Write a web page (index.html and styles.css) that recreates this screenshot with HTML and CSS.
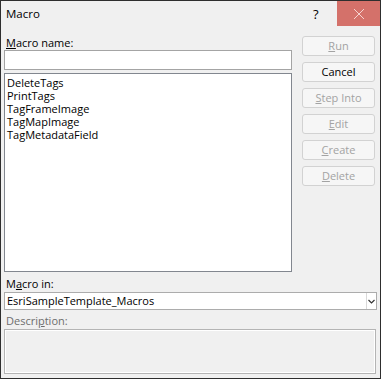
FILE: index.html
```html
<!DOCTYPE html>
<html>
<head>
<meta charset="utf-8">
<link rel="stylesheet" href="styles.css">
</head>
<body>
<div class="window">
  <div class="titlebar">
    <span class="title">Macro</span>
    <span class="help">?</span>
    <span class="close">
      <svg width="12" height="12" viewBox="0 0 12 12"><path d="M1 1 L11 11 M11 1 L1 11" stroke="#f6d3d0" stroke-width="1" fill="none"/></svg>
    </span>
  </div>
  <div class="content">
    <div class="toprow">
      <div class="leftcol">
        <div class="label"><u>M</u>acro name:</div>
        <div class="input"></div>
        <div class="list">
          <div class="item">DeleteTags</div>
          <div class="item">PrintTags</div>
          <div class="item">TagFrameImage</div>
          <div class="item">TagMapImage</div>
          <div class="item">TagMetadataField</div>
        </div>
      </div>
      <div class="buttons">
        <div class="btn disabled"><u>R</u>un</div>
        <div class="btn">Cancel</div>
        <div class="btn disabled"><u>S</u>tep Into</div>
        <div class="btn disabled"><u>E</u>dit</div>
        <div class="btn disabled"><u>C</u>reate</div>
        <div class="btn disabled"><u>D</u>elete</div>
      </div>
    </div>
    <div class="label label-in">M<u>a</u>cro in:</div>
    <div class="select">
      <span class="select-text">EsriSampleTemplate_Macros</span>
      <span class="arrow">
        <svg width="7" height="5" viewBox="0 0 7 5"><path d="M0.5 1 L3.5 4 L6.5 1" stroke="#333" stroke-width="1.2" fill="none"/></svg>
      </span>
    </div>
    <div class="label label-desc">Descri<u>p</u>tion:</div>
    <div class="desc"></div>
  </div>
</div>
</body>
</html>
```
FILE: styles.css
```css
html, body {
  margin: 0;
  padding: 0;
  background: #f0f0f0;
}
body {
  font-family: "Open Sans", "Noto Sans", sans-serif;
  font-size: 11px;
  color: #000;
}
.window {
  width: 381px;
  height: 379px;
  box-sizing: border-box;
  border: 1px solid #2e2e2e;
  background: #f0f0f0;
  display: flex;
  flex-direction: column;
}
.titlebar {
  height: 25px;
  display: flex;
  align-items: center;
}
.title {
  padding-left: 5px;
  font-size: 11.5px;
  flex: 1;
}
.help {
  width: 24px;
  text-align: left;
  font-size: 13px;
}
.close {
  width: 43px;
  height: 25px;
  background: #d4716a;
  display: flex;
  align-items: center;
  justify-content: center;
}
.content {
  padding: 0 3px;
  display: flex;
  flex-direction: column;
}
.toprow {
  display: flex;
  height: 247px;
}
.leftcol {
  width: 288px;
  padding-top: 9px;
  display: flex;
  flex-direction: column;
}
.label {
  height: 16px;
  line-height: 16px;
  padding-left: 2px;
  white-space: nowrap;
}
.leftcol .label {
  height: 15px;
  line-height: 15px;
}
.input {
  height: 20px;
  box-sizing: border-box;
  border: 1px solid #a4a4a4;
  background: #fff;
}
.list {
  margin-top: 3px;
  height: 199px;
  box-sizing: border-box;
  border: 1px solid #82878f;
  background: #fff;
  padding: 2px 2px;
}
.item {
  height: 13px;
  line-height: 13px;
  white-space: nowrap;
}
.buttons {
  margin-left: 10px;
  padding-top: 10px;
  display: flex;
  flex-direction: column;
  gap: 6px;
}
.btn {
  width: 73px;
  height: 20px;
  box-sizing: border-box;
  border: 1px solid #d2d2d2;
  border-radius: 3px;
  background: #f6f6f6;
  text-align: center;
  line-height: 18px;
}
.btn.disabled {
  color: #a3a3a3;
}
.label-in {
  margin-top: 3px;
}
.select {
  width: 373px;
  height: 18px;
  box-sizing: border-box;
  border: 1px solid #acacac;
  background: #fff;
  display: flex;
  align-items: center;
}
.select-text {
  flex: 1;
  padding-left: 2px;
  line-height: 16px;
}
.arrow {
  width: 9px;
  height: 16px;
  border-left: 1px solid #d9d9d9;
  display: flex;
  align-items: center;
  justify-content: center;
}
.label-desc {
  margin-top: 3px;
  color: #6d6d6d;
}
.desc {
  width: 372px;
  height: 45px;
  box-sizing: border-box;
  border: 1px solid #b4b4b4;
  box-shadow: inset 0 0 0 1px #fff;
  background: #f0f0f0;
}
```
